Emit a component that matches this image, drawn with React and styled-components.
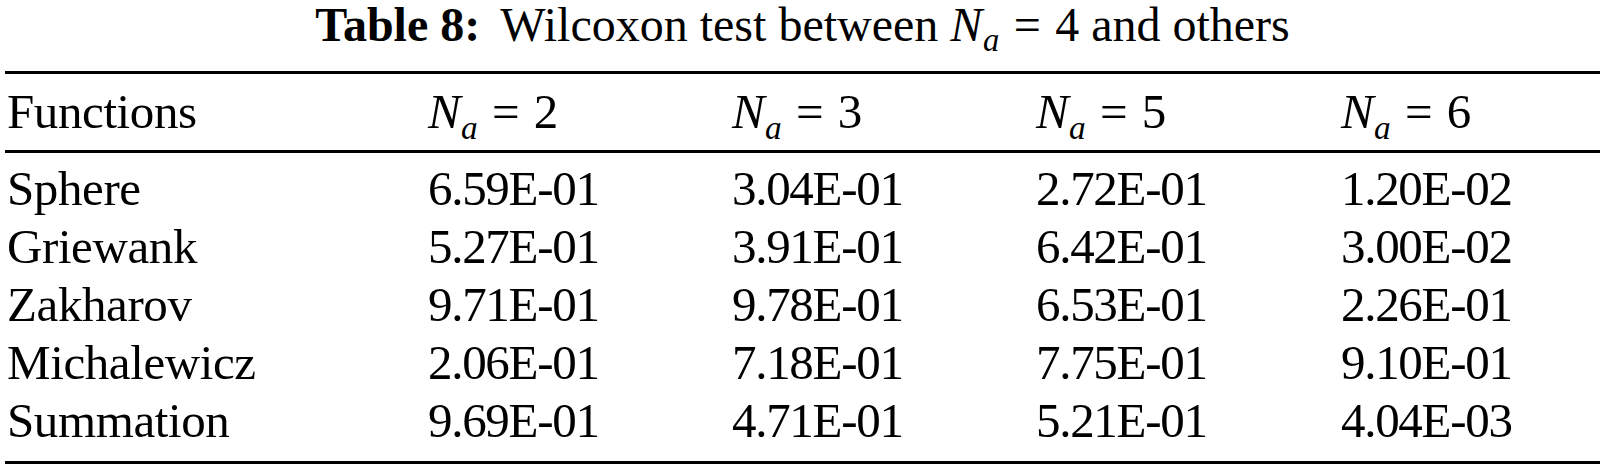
import React from "react";
import styled, { createGlobalStyle } from "styled-components";

const Global = createGlobalStyle`
  html, body { margin: 0; padding: 0; background: #ffffff; }
  body { font-family: "Liberation Serif", "Times New Roman", serif; color: #000; }
`;

const Page = styled.div`
  width: 1595px;
  margin-left: 5px;
`;

const Caption = styled.div`
  font-size: 48px;
  line-height: 50px;
  text-align: center;
  margin-bottom: 21px;
  white-space: nowrap;
`;

const Label = styled.b`
  font-weight: 700;
  margin-right: 0.42em;
`;

const Table = styled.div`
  border-top: 3px solid #000;
  border-bottom: 3px solid #000;
`;

const Head = styled.div`
  border-bottom: 3px solid #000;
  padding: 9px 0 9px;
`;

const Body = styled.div`
  padding: 7px 0 11px;
`;

const Row = styled.div`
  display: grid;
  grid-template-columns: 421px 304px 304px 305px 1fr;
  font-size: 49px;
  line-height: 58px;
  white-space: nowrap;
`;

const Cell = styled.div`
  padding-left: 2px;
  letter-spacing: ${(p) => (p.$num ? "-1.3px" : "-0.4px")};
`;

const Var = styled.i`
  font-style: italic;
`;

const Sub = styled.sub`
  font-style: italic;
  font-size: 0.68em;
  line-height: 0;
  vertical-align: baseline;
  position: relative;
  top: 0.32em;
  margin-left: 0.02em;
`;

const Eq = styled.span`
  margin: 0 0.3em;
`;

const Na = ({ n }) => (
  <>
    <Var>N</Var>
    <Sub>a</Sub>
    <Eq>=</Eq>
    {n}
  </>
);

const rows = [
  ["Sphere", "6.59E-01", "3.04E-01", "2.72E-01", "1.20E-02"],
  ["Griewank", "5.27E-01", "3.91E-01", "6.42E-01", "3.00E-02"],
  ["Zakharov", "9.71E-01", "9.78E-01", "6.53E-01", "2.26E-01"],
  ["Michalewicz", "2.06E-01", "7.18E-01", "7.75E-01", "9.10E-01"],
  ["Summation", "9.69E-01", "4.71E-01", "5.21E-01", "4.04E-03"],
];

export default function App() {
  return (
    <Page>
      <Global />
      <Caption>
        <Label>Table 8:</Label>Wilcoxon test between <Na n="4" /> and others
      </Caption>
      <Table>
        <Head>
          <Row>
            <Cell>Functions</Cell>
            <Cell><Na n="2" /></Cell>
            <Cell><Na n="3" /></Cell>
            <Cell><Na n="5" /></Cell>
            <Cell><Na n="6" /></Cell>
          </Row>
        </Head>
        <Body>
          {rows.map((r) => (
            <Row key={r[0]}>
              {r.map((c, i) => (
                <Cell key={i} $num={i > 0}>{c}</Cell>
              ))}
            </Row>
          ))}
        </Body>
      </Table>
    </Page>
  );
}
